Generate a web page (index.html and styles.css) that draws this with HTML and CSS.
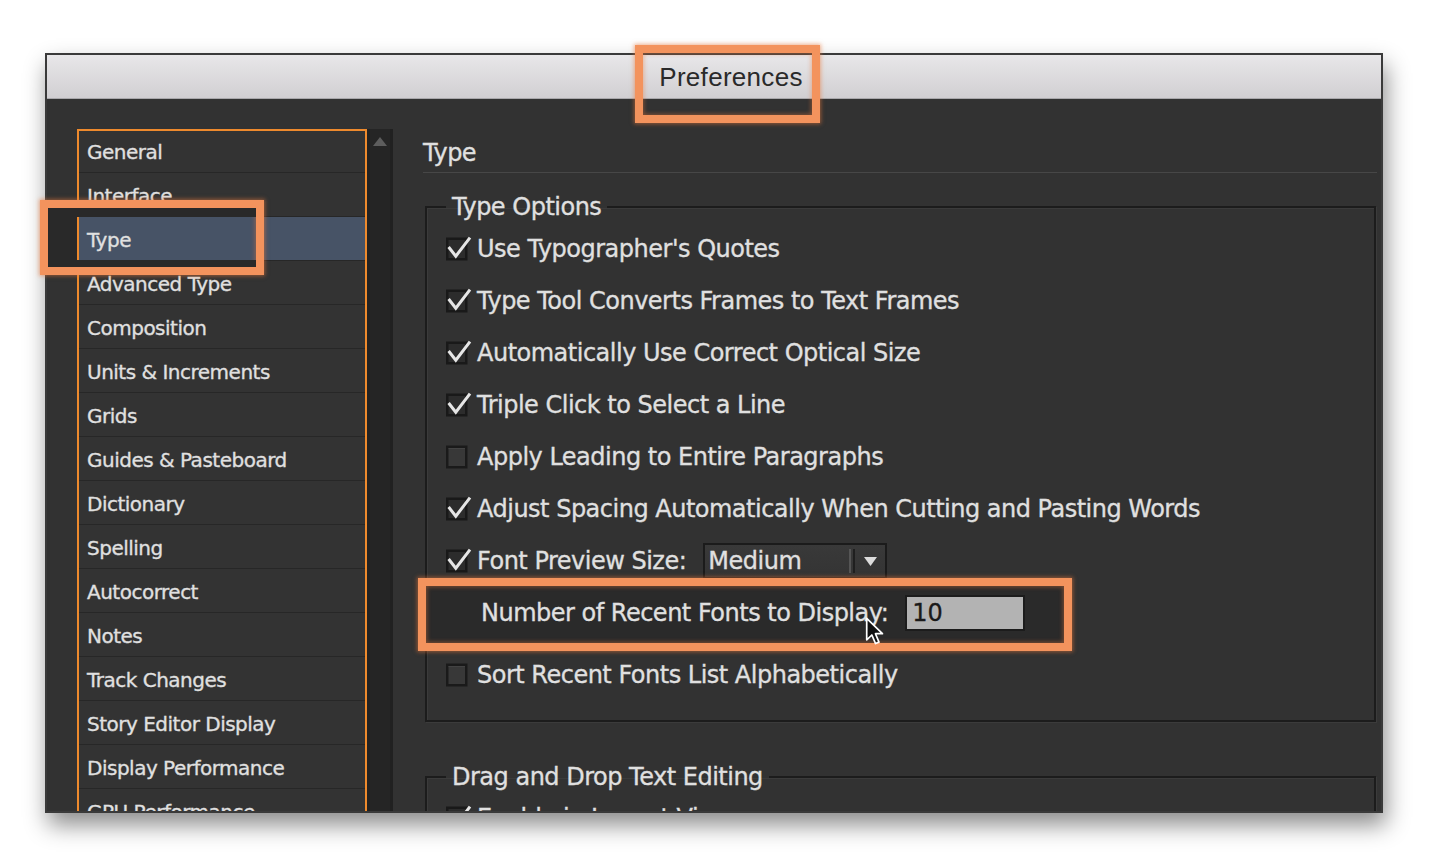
FILE: index.html
```html
<!DOCTYPE html>
<html lang="en">
<head>
<meta charset="utf-8">
<title>Preferences</title>
<link rel="stylesheet" href="styles.css">
</head>
<body>
<svg class="defs" width="0" height="0" aria-hidden="true">
  <defs>
    <symbol id="cb-on" viewBox="0 0 26 26">
      <rect x="1.25" y="2.75" width="19" height="20.5" fill="#2c2c2c" stroke="#191919" stroke-width="2.5"/>
      <path d="M2.6 11 L9.8 20.2 L24 1.6" fill="none" stroke="#e6e6e6" stroke-width="3" stroke-linejoin="miter"/>
    </symbol>
    <symbol id="cb-off" viewBox="0 0 26 26">
      <rect x="1.25" y="2.75" width="19" height="20.5" fill="#383838" stroke="#1a1a1a" stroke-width="2.5"/>
      <line x1="2.5" y1="4.6" x2="19" y2="4.6" stroke="#454545" stroke-width="1"/>
    </symbol>
  </defs>
</svg>

<div class="window">
  <header class="titlebar">
    <span class="title">Preferences</span>
    <span class="callout callout-title"></span>
  </header>

  <div class="body">
    <nav class="sidebar">
      <ul class="cats">
        <li>General</li>
        <li>Interface</li>
        <li class="sel">Type</li>
        <li>Advanced Type</li>
        <li>Composition</li>
        <li>Units &amp; Increments</li>
        <li>Grids</li>
        <li>Guides &amp; Pasteboard</li>
        <li>Dictionary</li>
        <li>Spelling</li>
        <li>Autocorrect</li>
        <li>Notes</li>
        <li>Track Changes</li>
        <li>Story Editor Display</li>
        <li>Display Performance</li>
        <li>GPU Performance</li>
      </ul>
      <span class="callout callout-type"><span class="callout-mask"></span></span>
    </nav>

    <div class="scrollbar">
      <svg class="scroll-up" width="26" height="22" viewBox="0 0 26 22"><path d="M13 8 L20 17 L6 17 Z" fill="#5d5d5d"/></svg>
    </div>

    <main class="panel">
      <h1 class="panel-title">Type</h1>

      <fieldset class="group">
        <legend>Type Options</legend>
        <label class="row"><svg class="cb"><use href="#cb-on"/></svg><span>Use Typographer's Quotes</span></label>
        <label class="row"><svg class="cb"><use href="#cb-on"/></svg><span>Type Tool Converts Frames to Text Frames</span></label>
        <label class="row"><svg class="cb"><use href="#cb-on"/></svg><span>Automatically Use Correct Optical Size</span></label>
        <label class="row"><svg class="cb"><use href="#cb-on"/></svg><span>Triple Click to Select a Line</span></label>
        <label class="row"><svg class="cb"><use href="#cb-off"/></svg><span>Apply Leading to Entire Paragraphs</span></label>
        <label class="row"><svg class="cb"><use href="#cb-on"/></svg><span>Adjust Spacing Automatically When Cutting and Pasting Words</span></label>
        <div class="row">
          <svg class="cb"><use href="#cb-on"/></svg><span>Font Preview Size:</span>
          <div class="select">
            <span class="select-value">Medium</span>
            <span class="select-divider"></span>
            <span class="select-arrow"><svg width="13" height="9" viewBox="0 0 13 9"><path d="M0 0 L13 0 L6.5 9 Z" fill="#dcdcdc"/></svg></span>
          </div>
        </div>
        <div class="row indent highlighted">
          <span>Number of Recent Fonts to Display:</span>
          <span class="field">10</span>
          <svg class="cursor" width="22" height="30" viewBox="0 0 15 21">
            <path d="M1 1 L1 16 L4.6 12.6 L7.2 18.6 L9.6 17.6 L7.1 11.7 L12 11.7 Z" fill="#111" stroke="#fff" stroke-width="1.2" stroke-linejoin="round"/>
          </svg>
        </div>
        <label class="row sort"><svg class="cb"><use href="#cb-off"/></svg><span>Sort Recent Fonts List Alphabetically</span></label>
      </fieldset>

      <fieldset class="group group-second">
        <legend>Drag and Drop Text Editing</legend>
        <label class="row"><svg class="cb"><use href="#cb-on"/></svg><span>Enable in Layout View</span></label>
        <label class="row"><svg class="cb"><use href="#cb-on"/></svg><span>Enable in Story Editor</span></label>
      </fieldset>
    </main>
  </div>
</div>
</body>
</html>
```

FILE: styles.css
```css
html, body {
  margin: 0;
  height: 100%;
  background: #ffffff;
  overflow: hidden;
}

body {
  font-family: "DejaVu Sans", "Noto Sans", sans-serif;
  color: #e0e0e0;
}

.defs {
  position: absolute;
  width: 0;
  height: 0;
}

.window {
  margin: 53px 0 0 45px;
  width: 1338px;
  height: 760px;
  box-sizing: border-box;
  border: 2px solid #3a3a3a;
  background: #323232;
  display: flex;
  flex-direction: column;
  box-shadow: 3px 12px 22px rgba(0, 0, 0, 0.45);
}

/* ---------- title bar ---------- */
.titlebar {
  position: relative;
  flex: none;
  height: 41px;
  padding: 2px 0 0 34px;
  border-bottom: 1px solid #a9a8ab;
  background: linear-gradient(#e8e7e9, #d1cfd2);
  display: flex;
  align-items: center;
  justify-content: center;
  font-family: "Liberation Sans", Arial, sans-serif;
  font-size: 26px;
  letter-spacing: 0.3px;
  color: #2a2a2a;
}

.callout {
  position: absolute;
  box-sizing: border-box;
  border: 8px solid #f3935d;
  box-shadow: 0 0 4px 1px rgba(232, 120, 60, 0.55), inset 0 0 4px 1px rgba(232, 120, 60, 0.45);
  z-index: 5;
}

.callout-title {
  left: 588px;
  top: -10px;
  width: 185px;
  height: 78px;
}

/* ---------- body ---------- */
.body {
  flex: 1;
  min-height: 0;
  display: flex;
  padding: 30px 4px 0 30px;
  -webkit-text-stroke: 0.3px currentColor;
}

.sidebar {
  position: relative;
  flex: none;
  width: 290px;
  box-sizing: border-box;
  border: 2px solid #ee8a2d;
  border-bottom: none;
  background: #333333;
  overflow-x: visible;
  overflow-y: clip;
}

.cats {
  list-style: none;
  margin: 0;
  padding: 0;
  font-size: 20px;
  letter-spacing: -0.5px;
}

.cats li {
  height: 43px;
  line-height: 47px;
  padding-left: 8px;
  border-bottom: 1px solid #272727;
  white-space: nowrap;
}

.cats li:first-child {
  height: 41px;
  line-height: 42px;
}

.cats li.sel {
  background: #475366;
}

.callout-type {
  left: -39px;
  top: 69px;
  width: 224px;
  height: 75px;
}

.callout-mask {
  display: block;
  height: 100%;
  box-sizing: border-box;
  border-style: solid;
  border-color: #292929;
  border-width: 9px 0 7px 29px;
}

.scrollbar {
  flex: none;
  width: 26px;
  background: #252525;
  box-shadow: inset 3px 0 0 #222, inset -3px 0 0 #212121;
}

.scroll-up {
  display: block;
}

/* ---------- panel ---------- */
.panel {
  flex: 1;
  min-width: 0;
  margin-left: 30px;
  overflow-x: visible;
  overflow-y: clip;
}

.panel-title {
  margin: 0;
  height: 39px;
  padding-top: 4px;
  line-height: 40px;
  font-size: 24px;
  font-weight: normal;
  letter-spacing: -0.5px;
  border-bottom: 1px solid #474747;
}

.group {
  position: relative;
  min-width: 0;
  margin: 19px 1px 0 2px;
  padding: 1px 18px 19px 19px;
  border: 2px solid #1c1c1c;
  box-shadow: 1px 1px 0 #3b3b3b, inset 1px 1px 0 #3b3b3b;
}

.group legend {
  padding: 0 6px;
  font-size: 24px;
  line-height: 30px;
  letter-spacing: -0.5px;
}

.group-second {
  margin-top: 40px;
  padding-top: 0;
}

.row {
  position: relative;
  z-index: 0;
  display: flex;
  align-items: center;
  height: 52px;
  font-size: 24px;
  letter-spacing: -0.5px;
  white-space: nowrap;
}

.row.indent {
  padding-left: 35px;
}

.row.sort {
  margin-top: 10px;
}

.cb {
  flex: none;
  width: 26px;
  height: 26px;
  margin-right: 5px;
}

.select {
  margin-left: 17px;
  width: 184px;
  height: 36px;
  box-sizing: border-box;
  border: 2px solid #1b1b1b;
  background: linear-gradient(#393939, #343434);
  display: flex;
  align-items: center;
}

.select-value {
  flex: 1;
  padding-left: 3px;
}

.select-divider {
  width: 2px;
  height: 24px;
  border-left: 2px solid #555555;
  border-right: 2px solid #1f1f1f;
}

.select-arrow {
  width: 30px;
  display: flex;
  justify-content: center;
  align-items: center;
}

.select-arrow svg {
  display: block;
}

.field {
  margin-left: 17px;
  flex: none;
  width: 120px;
  height: 36px;
  box-sizing: border-box;
  border: 2px solid #1c1c1c;
  background: #b3b3b3;
  color: #1a1a1a;
  padding-left: 5px;
  line-height: 32px;
  letter-spacing: 0;
}

.highlighted::before {
  content: "";
  position: absolute;
  left: -28px;
  top: -9px;
  width: 654px;
  height: 73px;
  box-sizing: border-box;
  border: 8px solid #f3935d;
  background: #2a2a2a;
  box-shadow: 0 0 4px 1px rgba(232, 120, 60, 0.55), inset 0 0 4px 1px rgba(232, 120, 60, 0.45);
  z-index: -1;
}

.cursor {
  position: absolute;
  left: 419px;
  top: 30px;
}
```
